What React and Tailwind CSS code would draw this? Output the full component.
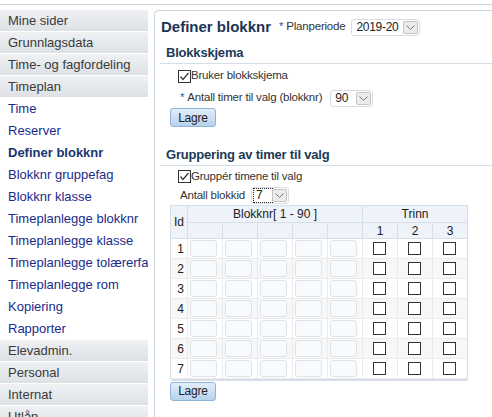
import React from 'react';

const topMenu = ['Mine sider', 'Grunnlagsdata', 'Time- og fagfordeling', 'Timeplan'];
const links = [
  'Time',
  'Reserver',
  'Definer blokknr',
  'Blokknr gruppefag',
  'Blokknr klasse',
  'Timeplanlegge blokknr',
  'Timeplanlegge klasse',
  'Timeplanlegge tolærerfa',
  'Timeplanlegge rom',
  'Kopiering',
  'Rapporter',
];
const bottomMenu = ['Elevadmin.', 'Personal', 'Internat', 'Utlån'];

const MenuHeader = ({ label }) => (
  <div className="h-[22px] w-[148px] border-b border-white bg-gradient-to-b from-[#eff1f3] to-[#dde1e5] pl-[8px] text-[13px] leading-[21px] text-[#3a3a3a] whitespace-nowrap overflow-hidden">
    {label}
  </div>
);

const Check = ({ checked }) => (
  <span className="inline-flex h-[13px] w-[13px] shrink-0 items-center justify-center border border-[#333] bg-white">
    {checked && (
      <svg width="11" height="11" viewBox="0 0 11 11">
        <path d="M1.5 5.5 L4 8.5 L9.5 2" fill="none" stroke="#333" strokeWidth="1.2" />
      </svg>
    )}
  </span>
);

const Chevron = () => (
  <svg width="9" height="5" viewBox="0 0 9 5">
    <path d="M0.5 0.5 L4.5 4.5 L8.5 0.5" fill="none" stroke="#777" strokeWidth="1" />
  </svg>
);

const Select = ({ value, width, focus }) => (
  <div
    className="flex h-[17px] items-center rounded-[3px] border border-[#d6dde5] bg-white"
    style={{ width }}
  >
    <span
      className={`ml-[2px] min-w-0 flex-1 overflow-hidden whitespace-nowrap pl-[2px] text-[12px] leading-[13px] tracking-[-0.3px] text-[#222] ${
        focus ? 'outline-dotted outline-1 outline-[#222]' : ''
      }`}
    >
      {value}
    </span>
    <span className="mr-[1px] flex h-[13px] w-[15px] shrink-0 items-center justify-center rounded-[2px] border border-[#c4c4c4] bg-[#ececec]">
      <Chevron />
    </span>
  </div>
);

const Button = () => (
  <button className="h-[19px] w-[46px] rounded-[3px] border border-[#8fb3d9] bg-gradient-to-b from-[#e2eefb] to-[#b8d2ee] text-[12px] leading-[16px] text-[#222]">
    Lagre
  </button>
);

const SectionTitle = ({ children }) => (
  <div className="ml-[5px] h-[21px] border-b border-[#d6dde5] pl-[6px] text-[13px] font-bold leading-[20px] text-[#1c3a56]">
    {children}
  </div>
);

export default function App() {
  const rows = [1, 2, 3, 4, 5, 6, 7];

  return (
    <div className="h-[417px] w-[492px] overflow-hidden bg-white pt-1 font-['Liberation_Sans',Arial,sans-serif]">
      <div className="flex border-t border-[#c8d0da] pt-[5px]">
        {/* sidebar */}
        <nav className="w-[148px] shrink-0">
          {topMenu.map((m) => (
            <MenuHeader key={m} label={m} />
          ))}
          {links.map((l) => (
            <div
              key={l}
              className={`h-[22px] pl-[8px] text-[13px] leading-[22px] whitespace-nowrap overflow-hidden ${
                l === 'Definer blokknr' ? 'font-bold text-[#1b3570]' : 'text-[#1a2b8c]'
              }`}
            >
              {l}
            </div>
          ))}
          {bottomMenu.map((m) => (
            <MenuHeader key={m} label={m} />
          ))}
        </nav>

        {/* main panel */}
        <main className="ml-[6px] h-[420px] flex-1 rounded-tl-[5px] border-l border-t border-[#cbd3dc] pt-[4px] text-[11.5px] tracking-[-0.2px] text-[#333]">
          <div className="flex h-[24px] items-center pl-[6px]">
            <span className="w-[118px] text-[15px] font-bold tracking-normal text-[#1b3552]">Definer blokknr</span>
            <span className="text-[#2a5ca8]">*</span>
            <span className="ml-[3px]">Planperiode</span>
            <span className="ml-[6px]">
              <Select value="2019-20" width={69} />
            </span>
          </div>

          <div className="mt-[4px]">
            <SectionTitle>Blokkskjema</SectionTitle>
          </div>
          <div className="ml-[23px] flex h-[24px] items-center">
            <Check checked />
            <span>Bruker blokkskjema</span>
          </div>
          <div className="ml-[25px] flex h-[20px] items-center">
            <span className="text-[#2a5ca8]">*</span>
            <span className="ml-[3px]">Antall timer til valg (blokknr)</span>
            <span className="ml-[8px]">
              <Select value="90" width={43} />
            </span>
          </div>
          <div className="ml-[15px]">
            <Button />
          </div>

          <div className="mt-[18px]">
            <SectionTitle>Gruppering av timer til valg</SectionTitle>
          </div>
          <div className="ml-[23px] flex h-[21px] items-center">
            <Check checked />
            <span>Gruppér timene til valg</span>
          </div>
          <div className="ml-[25px] flex h-[17px] items-center">
            <span>Antall blokkid</span>
            <span className="ml-[6px]">
              <Select value="7" width={38} focus />
            </span>
          </div>

          <table className="ml-[15px] mt-[1px] w-[298px] table-fixed border-collapse text-[12px] tracking-normal text-[#222]">
            <colgroup>
              <col className="w-[17px]" />
              {[0, 1, 2, 3, 4, 5, 6, 7].map((c) => (
                <col key={c} className="w-[35px]" />
              ))}
            </colgroup>
            <thead>
              <tr className="h-[17px] bg-[#eef2f9]">
                <th rowSpan={2} className="border border-[#d7dee8] font-normal">
                  Id
                </th>
                <th colSpan={5} className="border border-[#d7dee8] font-normal leading-[15px]">
                  Blokknr[ 1 - 90 ]
                </th>
                <th colSpan={3} className="border border-[#d7dee8] font-normal leading-[15px]">
                  Trinn
                </th>
              </tr>
              <tr className="h-[16px] bg-[#eef2f9]">
                {[0, 1, 2, 3, 4].map((c) => (
                  <th key={c} className="border border-[#d7dee8]" />
                ))}
                {[1, 2, 3].map((c) => (
                  <th key={c} className="border border-[#d7dee8] font-normal leading-[14px]">
                    {c}
                  </th>
                ))}
              </tr>
            </thead>
            <tbody>
              {rows.map((r) => (
                <tr key={r} className={`h-[20px] ${r % 2 === 0 ? 'bg-[#f7f7f7]' : 'bg-white'}`}>
                  <td className="border border-[#ebebeb] border-l-[#d7dee8] pr-[3px] text-right">{r}</td>
                  {[0, 1, 2, 3, 4].map((c) => (
                    <td key={c} className="border border-[#ebebeb] p-0">
                      <div className="ml-[2px] h-[17px] w-[27px] rounded-[3px] border border-[#dde3e9] bg-[#f8fbfe]" />
                    </td>
                  ))}
                  {[1, 2, 3].map((c) => (
                    <td
                      key={c}
                      className={`border border-[#ebebeb] p-0 ${c === 3 ? 'border-r-[#d7dee8]' : ''}`}
                    >
                      <div className="flex justify-center pr-[1px]">
                        <Check />
                      </div>
                    </td>
                  ))}
                </tr>
              ))}
              <tr className="h-[2px] bg-[#d7dee8]">
                <td colSpan={9} className="p-0" />
              </tr>
            </tbody>
          </table>
          <div className="ml-[15px] mt-[1px]">
            <Button />
          </div>
        </main>
      </div>
    </div>
  );
}
